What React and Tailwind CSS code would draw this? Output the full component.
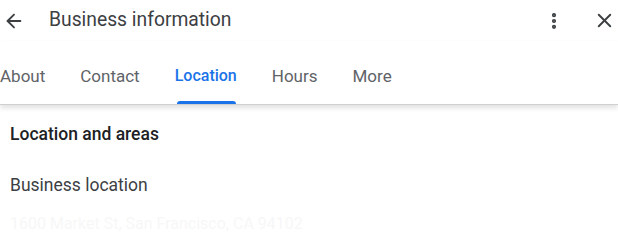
import { ArrowLeft, EllipsisVertical, X } from "lucide-react";

const tabs = ["About", "Contact", "Location", "Hours", "More"];

export default function App() {
  return (
    <div className="w-[618px] h-[250px] overflow-hidden bg-white font-['Roboto',sans-serif]">
      <header className="h-[41px] flex items-center">
        <button className="w-[28px] h-[40px] flex items-center justify-center text-[#3c4043]">
          <ArrowLeft size={22} strokeWidth={2} />
        </button>
        <h1 className="ml-[21px] text-[19.3px] text-[#3c4043]">Business information</h1>
        <div className="ml-auto flex items-center">
          <EllipsisVertical size={20} strokeWidth={3} className="text-[#3c4043]" />
          <X size={23} strokeWidth={2} className="ml-[29px] mr-[2px] text-[#3c4043]" />
        </div>
      </header>
      <nav className="relative h-[64px] flex items-end border-b border-[#d0d0d0] shadow-[0_3px_5px_rgba(0,0,0,0.12)]">
        <div className="flex gap-[35px] h-[40px]">
          {tabs.map((t) => (
            <div
              key={t}
              className={
                "relative flex items-start " +
                (t === "Location" ? "text-[16px] text-[#1a73e8] font-medium" : "text-[17px] text-[#5f6368]")
              }
            >
              {t}
              {t === "Location" && (
                <span className="absolute left-[2px] right-[1px] bottom-0 h-[3px] rounded-t-[3px] bg-[#1a73e8]" />
              )}
            </div>
          ))}
        </div>
      </nav>
      <section className="px-[10px]">
        <h2 className="mt-[16px] text-[17.5px] font-medium text-[#202124]">Location and areas</h2>
        <p className="mt-[25px] text-[17.5px] text-[#3c4043]">Business location</p>
        <p className="mt-[13px] text-[16px] text-[#f7f7f7]">1600 Market St, San Francisco, CA 94102</p>
      </section>
    </div>
  );
}
